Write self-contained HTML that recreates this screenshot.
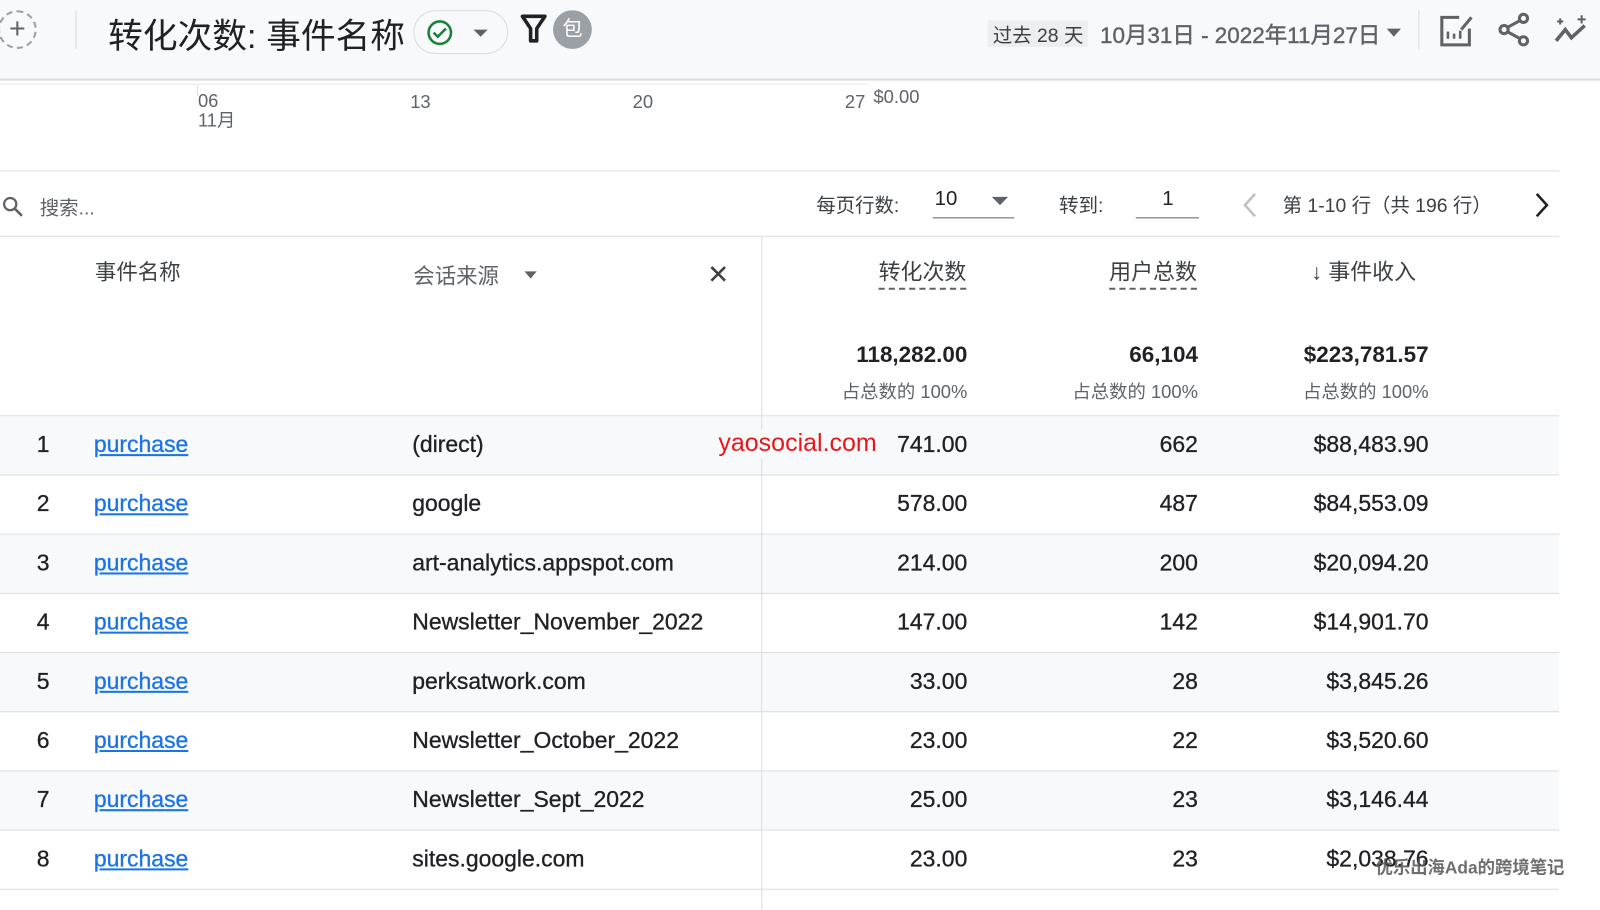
<!DOCTYPE html>
<html><head><meta charset="utf-8"><style>
*{margin:0;padding:0;box-sizing:border-box}
body{width:1600px;height:896px;overflow:hidden;background:#fff;font-family:"Liberation Sans","Noto Sans CJK SC",sans-serif;color:#202124;position:relative}
#w{position:absolute;left:0;top:0;width:1568px;height:878px;transform:scale(1.0204);transform-origin:0 0}
.a{position:absolute;white-space:nowrap}
.hdr{position:absolute;left:0;top:0;width:1600px;height:79px;background:#f8f9fa;border-bottom:2px solid #dadce0}
.row{position:absolute;left:0;width:1528px;height:58px;border-bottom:1px solid #dadce0;font-size:22.5px;-webkit-text-stroke:0.3px currentColor}
.row span{position:absolute;top:15px}
.g{background:#f8f9fa}
.lk{color:#1a73e8;text-decoration:underline}
.r{text-align:right}
</style></head><body><div id="w">
<div class="hdr">
<div class="a" style="left:-2px;top:10px;width:38px;height:38px;border:2px dashed #9aa0a6;border-radius:50%;font-size:28px;line-height:32px;text-align:center;color:#5f6368">+</div>
<div class="a" style="left:74px;top:10px;width:1px;height:38px;background:#dadce0"></div>
<div class="a" style="left:106px;top:8px;font-size:34px;color:#202124">转化次数: 事件名称</div>
<div class="a" style="left:405px;top:10px;width:93px;height:43px;border:1px solid #dadce0;border-radius:22px"></div>
<svg class="a" style="left:417px;top:18px" width="28" height="28" viewBox="0 0 28 28"><circle cx="14" cy="14" r="11" fill="none" stroke="#188038" stroke-width="2.5"/><path d="M8 14l4 4 8-8" fill="none" stroke="#188038" stroke-width="2.5"/></svg>
<div class="a" style="left:464px;top:29px;border-left:7px solid transparent;border-right:7px solid transparent;border-top:7px solid #5f6368"></div>
<svg class="a" style="left:510px;top:14px" width="26" height="30" viewBox="0 0 26 30"><path d="M2 2h22l-8 12v12h-6V14z" fill="none" stroke="#202124" stroke-width="3.5" stroke-linejoin="round"/></svg>
<div class="a" style="left:542px;top:10px;width:38px;height:38px;border-radius:50%;background:#9aa0a6;color:#fff;font-size:20px;text-align:center;line-height:38px">包</div>
<div class="a" style="left:968px;top:20px;width:98px;height:26px;background:#eceef0"></div>
<div class="a" style="left:973px;top:20px;font-size:19px;color:#3c4043">过去 28 天</div>
<div class="a" style="left:1078px;top:17px;font-size:22px;color:#5f6368;-webkit-text-stroke:0.4px #5f6368">10月31日 - 2022年11月27日</div>
<div class="a" style="left:1359px;top:28px;border-left:7px solid transparent;border-right:7px solid transparent;border-top:8px solid #5f6368"></div>
<div class="a" style="left:1390px;top:10px;width:1px;height:38px;background:#dadce0"></div>
<svg class="a" style="left:1408px;top:12px" width="40" height="34" viewBox="0 0 40 34"><path d="M22 5H5v27h27V16" fill="none" stroke="#5f6368" stroke-width="3"/><path d="M24 17l10-12" stroke="#5f6368" stroke-width="3"/><path d="M11 26v-7M17 26v-5M23 26v-8" stroke="#5f6368" stroke-width="2.5"/></svg>
<svg class="a" style="left:1466px;top:12px" width="36" height="34" viewBox="0 0 36 34"><circle cx="27" cy="6" r="4" fill="none" stroke="#5f6368" stroke-width="3"/><circle cx="8" cy="17" r="4" fill="none" stroke="#5f6368" stroke-width="3"/><circle cx="27" cy="28" r="4" fill="none" stroke="#5f6368" stroke-width="3"/><path d="M11 15l13-7M11 19l13 7" stroke="#5f6368" stroke-width="3"/></svg>
<svg class="a" style="left:1520px;top:12px" width="40" height="34" viewBox="0 0 40 34"><path d="M5 28l9-11 6 8 13-12" fill="none" stroke="#5f6368" stroke-width="3.5"/><path d="M9 6v6M6 9h6M30 3v8M26 7h8" stroke="#5f6368" stroke-width="2"/></svg>
</div>
<div class="a" style="left:0;top:82px;width:850px;height:1px;background:#e8eaed"></div>
<div class="a" style="left:193px;top:84px;width:1px;height:10px;background:#dadce0"></div>
<div class="a" style="left:194px;top:90px;font-size:18px;color:#5f6368;line-height:19px">06<br>11月</div>
<div class="a" style="left:402px;top:90px;font-size:18px;color:#5f6368">13</div>
<div class="a" style="left:620px;top:90px;font-size:18px;color:#5f6368">20</div>
<div class="a" style="left:828px;top:90px;font-size:18px;color:#5f6368">27</div>
<div class="a" style="left:856px;top:85px;font-size:18px;color:#5f6368">$0.00</div>
<div class="a" style="left:0;top:167px;width:1528px;height:1px;background:#dadce0"></div>
<svg class="a" style="left:2px;top:192px" width="22" height="22" viewBox="0 0 22 22"><circle cx="8" cy="8" r="6" fill="none" stroke="#5f6368" stroke-width="2.2"/><path d="M12.5 12.5l7 7" stroke="#5f6368" stroke-width="2.5"/></svg>
<div class="a" style="left:39px;top:189px;font-size:19px;color:#5f6368">搜索...</div>
<div class="a" style="left:800px;top:187px;font-size:19px;color:#3c4043">每页行数:</div>
<div class="a" style="left:916px;top:184px;font-size:20px;color:#202124">10</div>
<div class="a" style="left:972px;top:193px;border-left:8px solid transparent;border-right:8px solid transparent;border-top:8px solid #5f6368"></div>
<div class="a" style="left:914px;top:213px;width:80px;height:1px;background:#5f6368"></div>
<div class="a" style="left:1038px;top:187px;font-size:19px;color:#3c4043">转到:</div>
<div class="a" style="left:1139px;top:184px;font-size:20px">1</div>
<div class="a" style="left:1113px;top:213px;width:62px;height:1px;background:#5f6368"></div>
<svg class="a" style="left:1216px;top:188px" width="18" height="26" viewBox="0 0 18 26"><path d="M14 2L4 13l10 11" fill="none" stroke="#bdc1c6" stroke-width="2.5"/></svg>
<div class="a" style="left:1257px;top:187px;font-size:19px;color:#3c4043">第 1-10 行（共 196 行）</div>
<svg class="a" style="left:1502px;top:188px" width="18" height="26" viewBox="0 0 18 26"><path d="M4 2l10 11L4 24" fill="none" stroke="#202124" stroke-width="2.5"/></svg>
<div class="a" style="left:0;top:231px;width:1528px;height:1px;background:#dadce0"></div>
<div class="a" style="left:93px;top:251px;font-size:21px;color:#3c4043">事件名称</div>
<div class="a" style="left:405px;top:255px;font-size:21px;color:#5f6368">会话来源</div>
<div class="a" style="left:514px;top:266px;border-left:6px solid transparent;border-right:6px solid transparent;border-top:7px solid #5f6368"></div>
<div class="a" style="left:693px;top:254px;font-size:26px;color:#3c4043">✕</div>
<div class="a" style="left:861px;top:250px;font-size:21.5px;color:#3c4043;border-bottom:2px dashed #5f6368;padding-bottom:1px">转化次数</div>
<div class="a" style="left:1087px;top:250px;font-size:21.5px;color:#3c4043;border-bottom:2px dashed #5f6368;padding-bottom:1px">用户总数</div>
<div class="a" style="left:1285px;top:250px;font-size:21.5px;color:#3c4043">↓ 事件收入</div>
<div class="a r" style="left:748px;width:200px;top:335px;font-size:22px;font-weight:bold">118,282.00</div>
<div class="a r" style="left:974px;width:200px;top:335px;font-size:22px;font-weight:bold">66,104</div>
<div class="a r" style="left:1200px;width:200px;top:335px;font-size:22px;font-weight:bold">$223,781.57</div>
<div class="a r" style="left:748px;width:200px;top:370px;font-size:18px;color:#5f6368">占总数的 100%</div>
<div class="a r" style="left:974px;width:200px;top:370px;font-size:18px;color:#5f6368">占总数的 100%</div>
<div class="a r" style="left:1200px;width:200px;top:370px;font-size:18px;color:#5f6368">占总数的 100%</div>
<div class="a" style="left:0;top:407px;width:1528px;height:1px;background:#dadce0"></div>

<div class="row g" style="top:408px"><span style="left:36px">1</span><span class="lk" style="left:92px">purchase</span><span style="left:404px">(direct)</span><span class="r" style="left:748px;width:200px">741.00</span><span class="r" style="left:974px;width:200px">662</span><span class="r" style="left:1200px;width:200px">$88,483.90</span></div>
<div class="row" style="top:466px"><span style="left:36px">2</span><span class="lk" style="left:92px">purchase</span><span style="left:404px">google</span><span class="r" style="left:748px;width:200px">578.00</span><span class="r" style="left:974px;width:200px">487</span><span class="r" style="left:1200px;width:200px">$84,553.09</span></div>
<div class="row g" style="top:524px"><span style="left:36px">3</span><span class="lk" style="left:92px">purchase</span><span style="left:404px">art-analytics.appspot.com</span><span class="r" style="left:748px;width:200px">214.00</span><span class="r" style="left:974px;width:200px">200</span><span class="r" style="left:1200px;width:200px">$20,094.20</span></div>
<div class="row" style="top:582px"><span style="left:36px">4</span><span class="lk" style="left:92px">purchase</span><span style="left:404px">Newsletter_November_2022</span><span class="r" style="left:748px;width:200px">147.00</span><span class="r" style="left:974px;width:200px">142</span><span class="r" style="left:1200px;width:200px">$14,901.70</span></div>
<div class="row g" style="top:640px"><span style="left:36px">5</span><span class="lk" style="left:92px">purchase</span><span style="left:404px">perksatwork.com</span><span class="r" style="left:748px;width:200px">33.00</span><span class="r" style="left:974px;width:200px">28</span><span class="r" style="left:1200px;width:200px">$3,845.26</span></div>
<div class="row" style="top:698px"><span style="left:36px">6</span><span class="lk" style="left:92px">purchase</span><span style="left:404px">Newsletter_October_2022</span><span class="r" style="left:748px;width:200px">23.00</span><span class="r" style="left:974px;width:200px">22</span><span class="r" style="left:1200px;width:200px">$3,520.60</span></div>
<div class="row g" style="top:756px"><span style="left:36px">7</span><span class="lk" style="left:92px">purchase</span><span style="left:404px">Newsletter_Sept_2022</span><span class="r" style="left:748px;width:200px">25.00</span><span class="r" style="left:974px;width:200px">23</span><span class="r" style="left:1200px;width:200px">$3,146.44</span></div>
<div class="row" style="top:814px"><span style="left:36px">8</span><span class="lk" style="left:92px">purchase</span><span style="left:404px">sites.google.com</span><span class="r" style="left:748px;width:200px">23.00</span><span class="r" style="left:974px;width:200px">23</span><span class="r" style="left:1200px;width:200px">$2,038.76</span></div>
<div class="a" style="left:746px;top:232px;width:1px;height:660px;background:#dadce0"></div>
<div class="a" style="left:704px;top:421px;font-size:24.5px;color:#e8161b;background:#f8f9fa">yaosocial.com</div>
<div class="a" style="left:1348px;top:836px;font-size:17px;font-weight:bold;color:#555;opacity:.85">优乐出海Ada的跨境笔记</div>
</div></body></html>
